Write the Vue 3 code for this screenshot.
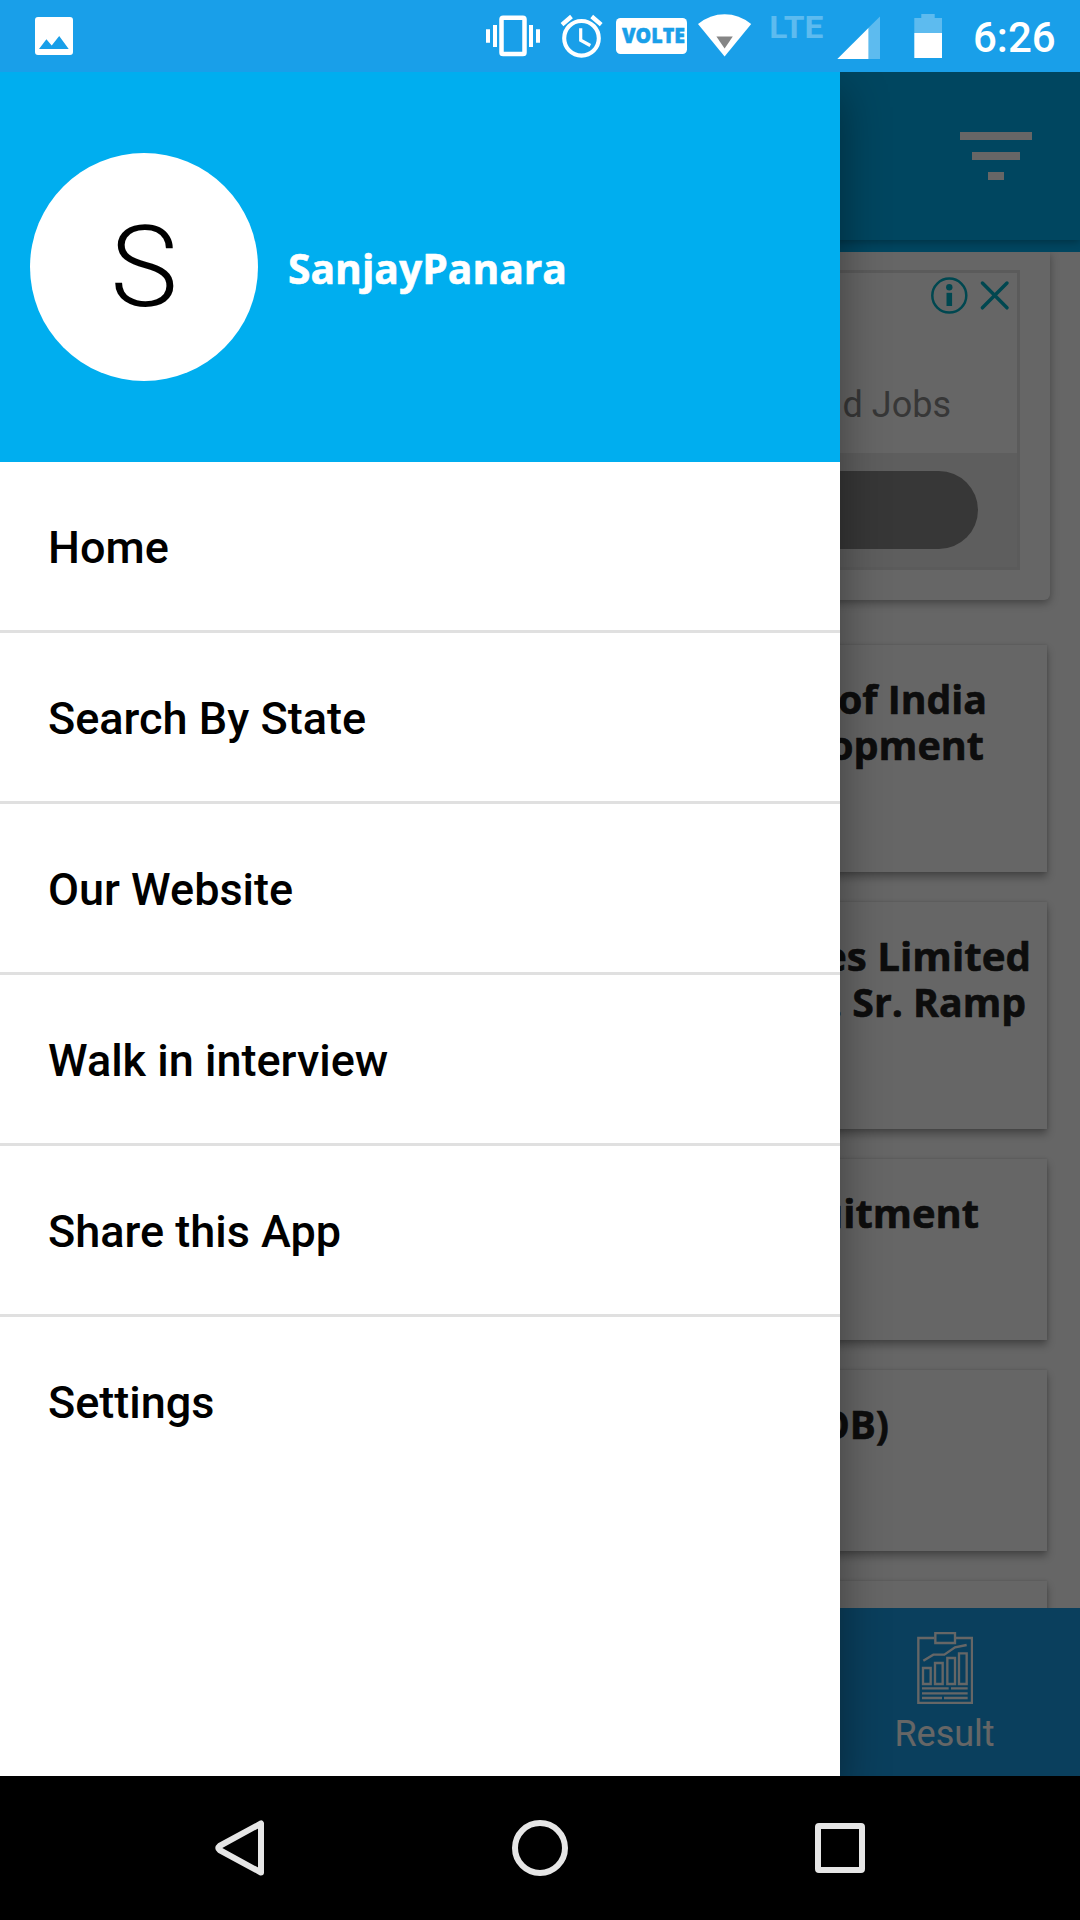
<script setup>
const menu = ['Home', 'Search By State', 'Our Website', 'Walk in interview', 'Share this App', 'Settings']

const jobs = [
  { size: 'tall', lines: [{ text: 'of India', x: 838, w: 149 }, { text: 'opment', x: 829, w: 155 }] },
  { size: 'tall', lines: [{ text: 'es Limited', x: 823, w: 208 }, { text: '. Sr. Ramp', x: 831, w: 195 }] },
  { size: 'short', lines: [{ text: 'uitment', x: 817, w: 162 }] },
  { size: 'short', lines: [{ text: 'OB)', x: 819, w: 70 }] },
  { size: 'short', lines: [] },
]
</script>

<template>
  <div class="screen">
    <header class="status">
      <svg class="photo" width="38" height="72" viewBox="35 0 38 72">
        <path fill="#fff" fill-rule="evenodd" d="M38 17H70a3 3 0 0 1 3 3V52a3 3 0 0 1-3 3H38a3 3 0 0 1-3-3V20a3 3 0 0 1 3-3ZM39 49H68.7L59.2 36L51.7 45.5L46.4 39.3Z" />
      </svg>
      <svg class="vibrate" width="54" height="72" viewBox="486 0 54 72" fill="#fff">
        <path d="M486 29.3h4v13.4h-4zM493 25h4v22h-4zM529 25h4v22h-4zM536 29.3h4v13.4h-4z" />
        <rect x="501.5" y="17.7" width="23" height="36.3" rx="1.6" fill="none" stroke="#fff" stroke-width="4.5" />
      </svg>
      <svg class="alarm" width="43" height="72" viewBox="560 0 43 72" fill="none" stroke="#fff">
        <circle cx="581.5" cy="38.3" r="17.3" stroke-width="4.1" />
        <path stroke-width="4.3" d="M562 24.6L571.5 16.5M601.2 24.6L591.7 16.5" />
        <path stroke-width="3.2" d="M580.7 28.2V40.2L590.3 45.5" />
      </svg>
      <svg class="volte" width="71" height="72" viewBox="616 0 71 72">
        <rect x="616" y="18" width="71" height="36" rx="4.5" fill="#fff" />
        <text x="622" y="43" textLength="63" lengthAdjust="spacingAndGlyphs" font-size="20.8" font-weight="800" stroke="#199fe9" stroke-width="0.5" fill="#199fe9">VOLTE</text>
      </svg>
      <svg class="wifi" width="54" height="72" viewBox="698 0 54 72">
        <path fill="#fff" d="M698 24Q710 14.2 724.6 14.2T751.2 24L724.6 56.6Z" />
        <path fill="#858585" d="M716.4 36.4H732.8L724.6 48.4Z" />
      </svg>
      <svg class="lte" width="54" height="72" viewBox="770 0 54 72">
        <text x="769.3" y="38" textLength="54" lengthAdjust="spacingAndGlyphs" font-size="32" font-weight="700" fill="#5dbbef">LTE</text>
      </svg>
      <svg class="signal" width="43" height="72" viewBox="837 0 43 72">
        <path fill="#5dbbef" d="M868 59V28.3L880 16.5V59Z" />
        <path fill="#fff" d="M837.3 59L868.4 28V59Z" />
      </svg>
      <svg class="battery" width="28" height="72" viewBox="914 0 28 72">
        <path fill="#5dbbef" d="M914.3 33V18H921.3V14H934.7V18H942V33Z" />
        <path fill="#fff" d="M914.3 33H942V58H914.3Z" />
      </svg>
      <span class="clock">6:26</span>
    </header>

    <div class="app">
      <main class="page">
        <div class="toolbar">
          <svg width="72" height="48" viewBox="0 0 72 48" fill="#fff">
            <path d="M0 0H72V8H0zM12 20H60V28H12zM28 40H44V48H28z" />
          </svg>
        </div>
        <div class="strip"></div>
        <section class="feed">
          <article class="ad-card">
            <div class="ad">
              <div class="ad-top">
                <svg class="ad-marks" width="80" height="38" viewBox="930 276 80 38" fill="none" stroke="#00b2c8">
                  <circle cx="949.3" cy="295.6" r="17" stroke-width="2.5" />
                  <path stroke-width="3.5" stroke-linecap="round" d="M982.4 283L1007 307.8M1007 283L982.4 307.8" />
                  <circle cx="949.3" cy="287.2" r="3.2" fill="#00b2c8" stroke="none" />
                  <path stroke-width="5.6" d="M949.3 292.8V306" />
                </svg>
                <span class="ad-text">d Jobs</span>
              </div>
              <div class="ad-bottom"><div class="pill"></div></div>
            </div>
          </article>
          <article v-for="(job, i) in jobs" :key="i" class="job" :class="job.size">
            <svg v-for="line in job.lines" :key="line.text" class="title" width="230" height="46" viewBox="817 0 230 46">
              <text :x="line.x" y="38" :textLength="line.w" lengthAdjust="spacingAndGlyphs">{{ line.text }}</text>
            </svg>
          </article>
        </section>
        <nav class="tabs">
          <div class="tab">
            <svg width="56" height="72" viewBox="291 156 168 216" fill="none" stroke="#fff" stroke-width="7">
              <path d="M343 174H295V369H456V174H407" />
              <path d="M346 159H405V189H346Z" />
              <path d="M310 242L340 224H373L405 202L440 195" />
              <path d="M309 264H332V312H309ZM345 249H368V312H345ZM382 234H405V312H382ZM417 220H440V312H417Z" />
              <path d="M306 325H386M393 325H443M306 340H443M306 354H366M372 354H443" />
            </svg>
            <span>Result</span>
          </div>
        </nav>
      </main>
      <div class="scrim"></div>
      <aside class="drawer">
        <div class="profile">
          <div class="avatar">S</div>
          <svg class="name" width="290" height="60" viewBox="287 0 290 60">
            <text x="288" y="44.5" textLength="279" lengthAdjust="spacingAndGlyphs">SanjayPanara</text>
          </svg>
        </div>
        <ul class="menu">
          <li v-for="item in menu" :key="item">{{ item }}</li>
        </ul>
      </aside>
    </div>

    <footer class="navbar">
      <svg width="60" height="60" viewBox="-30 -30 60 60"><path d="M21 -24.5V24.5L-20.5 2Q-23 0 -20.5 -2Z" /></svg>
      <svg width="60" height="60" viewBox="-30 -30 60 60"><circle r="25" /></svg>
      <svg width="60" height="60" viewBox="-30 -30 60 60"><rect x="-22" y="-22" width="44" height="44" rx="1" /></svg>
    </footer>
  </div>
</template>

<style>
body {
  margin: 0;
}
</style>

<style scoped>
.screen {
  width: 1080px;
  height: 1920px;
  display: flex;
  flex-direction: column;
  overflow: hidden;
  font-family: Roboto, "Liberation Sans", sans-serif;
}
svg {
  display: block;
  flex: none;
}
.status {
  height: 72px;
  flex: none;
  display: flex;
  background: #199fe9;
}
.photo { margin-left: 35px; }
.vibrate { margin-left: 413px; }
.alarm { margin-left: 20px; }
.volte {
  margin-left: 13px;
  font-family: "Open Sans", "Noto Sans", sans-serif;
}
.wifi { margin-left: 11px; }
.lte { margin-left: 18px; }
.signal { margin-left: 13px; }
.battery { margin-left: 34px; }
.clock {
  margin-left: 31px;
  font-size: 42px;
  font-weight: 500;
  line-height: 76px;
  color: #fff;
}
.app {
  position: relative;
  height: 1704px;
  flex: none;
  overflow: hidden;
}
.page {
  height: 100%;
  display: flex;
  flex-direction: column;
  background: #fefefe;
}
.toolbar {
  height: 168px;
  flex: none;
  box-sizing: border-box;
  padding: 60px 48px 0 0;
  display: flex;
  justify-content: flex-end;
  background: #00aeef;
  box-shadow: 0 2px 8px rgba(0, 0, 0, 0.3);
  z-index: 1;
}
.strip {
  height: 12px;
  flex: none;
  background: #00aeef;
}
.feed {
  flex: 1;
  min-height: 0;
  overflow: hidden;
  display: flex;
  flex-direction: column;
}
.ad-card {
  flex: none;
  height: 348px;
  box-sizing: border-box;
  margin: 0 30px 45px;
  padding: 18px 30px 30px;
  border-radius: 0 0 6px 6px;
  background: #fff;
  box-shadow: 0 3px 8px rgba(0, 0, 0, 0.35);
}
.ad {
  height: 300px;
  box-sizing: border-box;
  border: 3px solid #e4e4e4;
  display: flex;
  flex-direction: column;
}
.ad-top {
  height: 180px;
  display: flex;
  flex-direction: column;
  align-items: flex-end;
}
.ad-marks {
  margin: 3px 7px 0 0;
}
.ad-text {
  margin: 70px 66px 0 0;
  font-size: 36px;
  line-height: 42px;
  color: #8a8a8a;
}
.ad-bottom {
  flex: 1;
  padding: 18px 39px 0;
  background: #ebebeb;
}
.pill {
  height: 78px;
  border-radius: 39px;
  background: #8a8a8a;
}
.job {
  flex: none;
  box-sizing: border-box;
  margin: 0 33px 30px;
  padding-top: 31px;
  display: flex;
  flex-direction: column;
  align-items: flex-end;
  background: #fff;
  box-shadow: 0 5px 8px rgba(0, 0, 0, 0.32), 0 0 3px rgba(0, 0, 0, 0.15);
}
.tall { height: 227px; }
.short { height: 181px; }
.title {
  overflow: visible;
}
.title text,
.name text {
  font-family: "Open Sans", "Noto Sans", sans-serif;
  font-weight: 700;
  font-size: 40px;
  fill: #212121;
  stroke: #212121;
  stroke-width: 0.6;
  stroke-linejoin: round;
}
.name text {
  font-size: 41.5px;
  fill: #fff;
  stroke: #fff;
}
.tabs {
  height: 168px;
  flex: none;
  display: flex;
  justify-content: flex-end;
  background: #199fe9;
}
.tab {
  width: 270px;
  box-sizing: border-box;
  padding-top: 24px;
  display: flex;
  flex-direction: column;
  align-items: center;
  font-size: 36px;
  line-height: 42px;
  color: #fff;
}
.tab span {
  margin: 9px 1px 0 0;
}
.scrim {
  position: absolute;
  inset: 0;
  z-index: 2;
  background: rgba(0, 0, 0, 0.6);
}
.drawer {
  position: absolute;
  z-index: 3;
  top: 0;
  left: 0;
  width: 840px;
  height: 100%;
  background: #fff;
  box-shadow: 0 20px 44px rgba(0, 0, 0, 0.4);
}
.profile {
  height: 390px;
  box-sizing: border-box;
  padding: 0 29px 0 30px;
  display: flex;
  align-items: center;
  gap: 29px;
  background: #00aeef;
}
.avatar {
  width: 228px;
  height: 228px;
  border-radius: 50%;
  background: #fff;
  color: #000;
  text-align: center;
  font-size: 114px;
  font-weight: 300;
  line-height: 229px;
}
.name {
  margin-top: 4px;
}
.menu {
  margin: 0;
  padding: 0;
  list-style: none;
}
.menu li {
  height: 168px;
  padding-left: 48px;
  font-size: 45px;
  font-weight: 500;
  line-height: 172px;
  color: #000;
  border-bottom: 3px solid #e0e0e0;
}
.menu li:last-child {
  border-bottom: none;
}
.navbar {
  height: 144px;
  flex: none;
  display: flex;
  justify-content: center;
  align-items: center;
  gap: 240px;
  background: #000;
}
.navbar svg {
  fill: none;
  stroke: #e6e6e6;
  stroke-width: 6;
  stroke-linejoin: round;
}
</style>
